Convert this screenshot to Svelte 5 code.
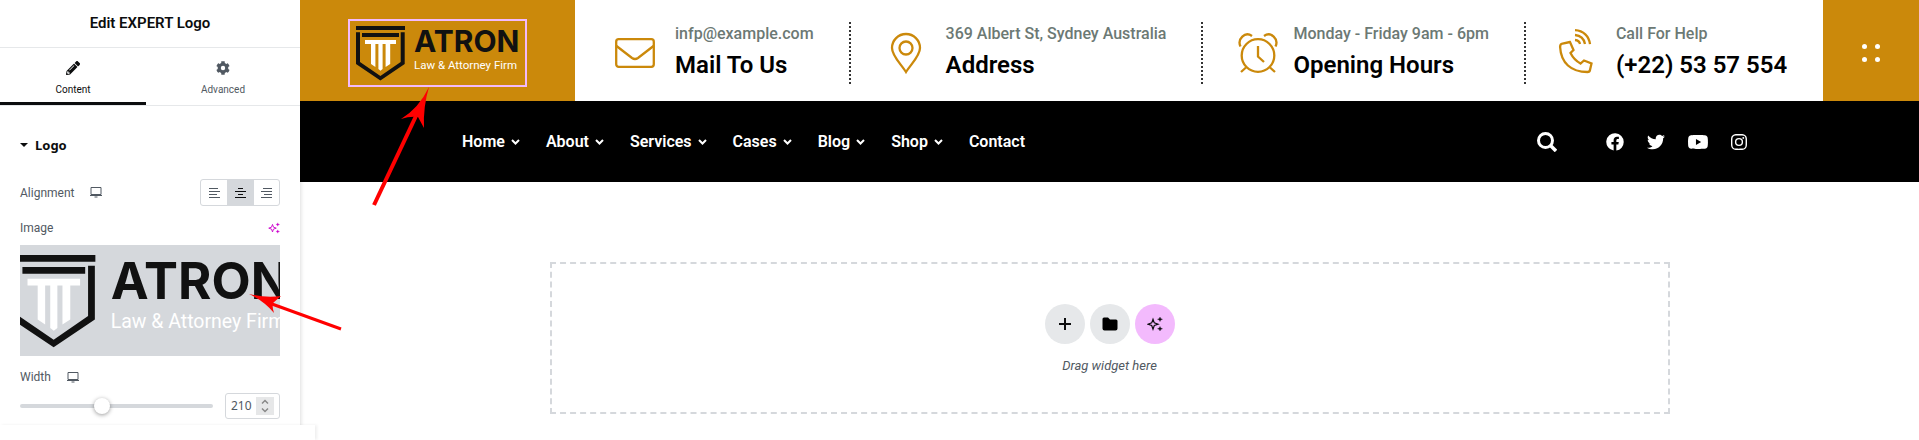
<script lang="ts">
  type Info = { icon: string; label: string; title: string };

  let align = $state('center');
  let width = $state(210);

  const infos: Info[] = [
    { icon: 'mail', label: 'infp@example.com', title: 'Mail To Us' },
    { icon: 'pin', label: '369 Albert St, Sydney Australia', title: 'Address' },
    { icon: 'clock', label: 'Monday - Friday 9am - 6pm', title: 'Opening Hours' },
    { icon: 'phone', label: 'Call For Help', title: '(+22) 53 57 554' },
  ];

  const menu = ['Home', 'About', 'Services', 'Cases', 'Blog', 'Shop', 'Contact'];

  // Line segments for the three text-alignment glyphs, top to bottom.
  const aligns = [
    { value: 'left', d: 'M0 1.500h9M0 4.500h11M0 7.500h8M0 10.500h11' },
    { value: 'center', d: 'M3 1.500h5M0 4.500h11M3 7.500h5M0 10.500h11' },
    { value: 'right', d: 'M2 1.500h9M0 4.500h11M3 7.500h8M0 10.500h11' },
  ];

  const socials = [
    { name: 'Facebook', w: 18, h: 18, box: '0 0 512 512', d: 'M504 256a248 248 0 1 0-287 245V328h-63v-72h63v-55c0-62 37-97 94-97 27 0 55 5 55 5v61h-31c-31 0-41 20-41 39v47h69l-11 72h-58v173a248 248 0 0 0 210-245z' },
    { name: 'Twitter', w: 18, h: 18, box: '0 0 512 512', d: 'M459 152c0 4 .3 9 .3 14C459 304 354 465 161 465c-60 0-115-17-161-47 8 1 16 1 25 1 49 0 94-16 130-45-46-1-85-31-98-73 7 1 13 2 20 2 9 0 19-2 27-4-48-10-84-52-84-103v-1c14 8 30 13 47 13-28-19-47-51-47-87 0-19 5-37 14-53 52 64 129 105 216 110-2-8-3-16-3-24 0-58 47-105 105-105 30 0 58 13 77 33 24-5 46-13 66-25-8 24-24 45-46 58 21-2 42-8 60-16-14 21-31 39-51 53z' },
    { name: 'YouTube', w: 20, h: 14, box: '16 64 544 384', d: 'M550 124c-6-24-25-42-49-49-43-11-213-11-213-11s-170 0-213 11c-24 7-43 25-49 49-11 43-11 132-11 132s0 90 11 133c6 23 25 41 49 48 43 11 213 11 213 11s170 0 213-11c24-7 43-25 49-48 11-43 11-133 11-133s0-89-11-132zM232 338V175l143 81z' },
    { name: 'Instagram', w: 16, h: 16, box: '0 32 448 448', d: 'M224 141a115 115 0 1 0 0 230 115 115 0 0 0 0-230zm0 190a75 75 0 1 1 0-150 75 75 0 0 1 0 150zm146-194a27 27 0 1 1-53 0 27 27 0 0 1 53 0zM132 32C60 34 2 90 1 164c-2 40-2 144 0 184 1 74 60 130 131 132 40 2 144 2 184 0 74-2 130-60 131-132 2-40 2-144 0-184-1-74-59-130-131-132-40-2-144-2-184 0zM312 72c64 1 94 31 95 96 2 36 2 140 0 176-1 62-31 94-95 96-36 2-140 2-176 0-63-2-94-32-96-96-2-36-2-140 0-176 1-62 31-95 96-96 36-2 140-2 176 0z' },
  ];
</script>

{#snippet logo()}
  <svg class="logo" viewBox="0 0 163 56" role="img" aria-label="Atron Law &amp; Attorney Firm">
    <g fill="#111">
      <path d="M0 0h49v4H0zM6 7h37v4H6z" />
      <path d="M0 6.3h4V36l20.4 14 20.3-14V6.3h4V38L24.4 54.4 0 38z" />
      <text x="58" y="26" font-family="Inter, sans-serif" font-size="30" font-weight="700">ATRON</text>
    </g>
    <g fill="#fff">
      <path d="M9 14h31v4h-5.8v20l-4.6 3V18h-3v25l-2.1 1.7-2.1-1.7V18h-3v23L15 38V18H9z" />
      <text x="58" y="43" font-family="Roboto, sans-serif" font-size="11.5">Law &amp; Attorney Firm</text>
    </g>
  </svg>
{/snippet}

{#snippet screen()}
  <svg class="screen" viewBox="0 0 12 11" width="12" height="11" aria-hidden="true">
    <path d="M1 .5h10v7H1zM0 8.500h12M4.500 10h3" fill="none" stroke="currentColor" />
  </svg>
{/snippet}

{#snippet sparkle(size: number)}
  <svg viewBox="0 0 16 16" width={size} height={size} aria-hidden="true">
    <path d="M6 3.200 7.300 6.900 11 8.200 7.300 9.500 6 13.200 4.700 9.500 1 8.200 4.700 6.900z" fill="none" stroke="currentColor" stroke-width="1.200" />
    <path d="m13 1 .7 1.600 1.800.7-1.800.7L13 5.600l-.7-1.600-1.800-.7 1.800-.7zM13 10.400l.7 1.600 1.800.7-1.800.7-.7 1.600-.7-1.600-1.800-.7 1.800-.7z" fill="currentColor" stroke="currentColor" stroke-width=".3" />
  </svg>
{/snippet}

<div class="editor">
  <aside class="panel">
    <h1>Edit EXPERT Logo</h1>

    <div class="tabs" role="tablist">
      <button class="tab active" role="tab" aria-selected="true">
        <svg viewBox="0 0 512 512" width="14" height="14" aria-hidden="true">
          <path d="m498 142-47 46c-5 5-12 5-17 0L324 78c-5-5-5-12 0-17l46-47c19-19 49-19 68 0l60 60c19 19 19 49 0 68zm-214-41L22 363 0 485c-2 16 11 30 28 27l121-21 262-263c5-4 5-12 0-17L301 101c-5-4-12-4-17 0zM124 340c-5-5-5-13 0-18l154-154c5-5 13-5 18 0s5 13 0 18L142 340c-5 5-13 5-18 0zm-36 84h48v36l-64 12-32-32 12-64h36z" />
        </svg>
        Content
      </button>
      <button class="tab" role="tab" aria-selected="false">
        <svg viewBox="0 0 512 512" width="14" height="14" aria-hidden="true">
          <path d="m487 316-42-25c4-23 4-47 0-70l42-25c5-3 8-9 6-14-12-36-30-68-55-95-4-4-10-5-15-2l-42 24c-18-15-39-27-61-35V25c0-5-4-11-10-12-36-8-74-8-109 0-6 1-10 7-10 12v49c-22 8-43 20-61 35L88 85c-5-3-11-2-15 2-25 27-44 60-55 95-2 5 1 11 6 14l42 25c-4 23-4 47 0 70l-42 25c-5 3-8 9-6 14 12 36 30 68 55 95 4 4 10 5 15 2l42-24c18 15 39 27 61 35v49c0 5 4 11 10 12 36 8 74 8 109 0 6-1 10-7 10-12v-49c22-8 43-20 61-35l42 24c5 3 11 2 15-2 25-27 44-60 55-95 1-5-1-11-6-14zm-231 20a80 80 0 1 1 0-160 80 80 0 0 1 0 160z" />
        </svg>
        Advanced
      </button>
    </div>

    <section class="controls">
      <button class="heading"><span class="caret"></span>Logo</button>

      <div class="row align-row">
        <span class="name">Alignment {@render screen()}</span>
        <div class="choices" role="group" aria-label="Alignment">
          {#each aligns as a}
            <button
              class:chosen={align === a.value}
              aria-label={a.value}
              aria-pressed={align === a.value}
              onclick={() => (align = a.value)}
            >
              <svg viewBox="0 0 11 11" width="11" height="11"><path d={a.d} stroke="currentColor" /></svg>
            </button>
          {/each}
        </div>
      </div>

      <div class="row image-row">
        <span class="name">Image</span>
        <button class="ai" aria-label="Edit with AI">{@render sparkle(12)}</button>
      </div>
      <button class="preview" aria-label="Choose image">{@render logo()}</button>

      <div class="row width-row">
        <label class="name" for="logo-width">Width {@render screen()}</label>
      </div>
      <div class="row slider-row">
        <input type="range" min="0" max="500" bind:value={width} aria-label="Width slider" />
        <div class="number">
          <input id="logo-width" type="text" inputmode="numeric" bind:value={width} />
          <span class="spin" aria-hidden="true">
            <svg viewBox="0 0 18 18" width="18" height="18"><path d="m6 6.500 3-3 3 3M6 11.500l3 3 3-3" fill="none" stroke="#888" stroke-width="1.500" /></svg>
          </span>
        </div>
      </div>
    </section>
    <div class="panel-end"></div>
  </aside>

  <main class="site">
    <header class="top">
      <a class="brand" href="#home"><span class="selected">{@render logo()}</span></a>
      <div class="infos">
        {#each infos as info}
          <div class="info {info.icon}">
            <svg class="icon" viewBox="0 0 40 48" width="40" height="48" fill="none" stroke="#cb890b" stroke-width="2.300" aria-hidden="true">
              {#if info.icon === 'mail'}
                <rect x="1.200" y="10.200" width="37.600" height="27.600" rx="2.500" />
                <path d="M1.500 17 17 29q3 2 6 0l15.500-12" />
              {:else if info.icon === 'pin'}
                <path d="M20 43C15 35 6 27 6 19a14 14 0 0 1 28 0c0 8-9 16-14 24z" />
                <circle cx="20" cy="19" r="6.500" />
              {:else if info.icon === 'clock'}
                <circle cx="20" cy="26.500" r="16.300" />
                <path d="M20 17v10.500l6 5.500M8 38.500l-5 4.500M32 38.500l5 4.500M2.500 17.500C-1 10 7 2 14 7M37.500 17.500C41 10 33 2 26 7" />
              {:else}
                <path d="m14 13-7.500 1.500c-2 .5-2.500 1.500-2.400 3.500C5 34 15 43 31.500 43c1.500 0 2.300-.6 2.500-2l1.500-6.500-7.500-3-3.500 3c-4.500-2.500-7.500-5.500-10-10.500l3-3zM19 1.200c8.500.5 14 6 15 14M19 6c5.500.5 9 4 10 9M19 11c2.800.3 4.600 1.800 5 4" />
              {/if}
            </svg>
            <div>
              <p>{info.label}</p>
              <h2>{info.title}</h2>
            </div>
          </div>
        {/each}
      </div>
      <button class="more" aria-label="More">
        <i></i><i></i><i></i><i></i>
      </button>
    </header>

    <nav class="menu">
      <ul>
        {#each menu as item, i}
          <li>
            <a href="#{item.toLowerCase()}">
              {item}
              {#if i < menu.length - 1}
                <svg viewBox="0 0 9 6" width="9" height="6" aria-hidden="true"><path d="m1 1 3.500 3.500L8 1" fill="none" stroke="#fff" stroke-width="2" /></svg>
              {/if}
            </a>
          </li>
        {/each}
      </ul>
      <div class="links">
        <button class="search" aria-label="Search">
          <svg viewBox="0 0 20 20" width="20" height="20"><circle cx="8.500" cy="8.500" r="7" fill="none" stroke="#fff" stroke-width="3" /><path d="m13.500 13.500 5.500 5.500" stroke="#fff" stroke-width="3.500" /></svg>
        </button>
        {#each socials as s}
          <a href="#{s.name.toLowerCase()}" aria-label={s.name}>
            <svg viewBox={s.box} width={s.w} height={s.h}><path d={s.d} fill="#fff" /></svg>
          </a>
        {/each}
      </div>
    </nav>

    <section class="dropzone">
      <div class="actions">
        <button aria-label="Add container">
          <svg viewBox="0 0 12 12" width="12" height="12"><path d="M6 0v12M0 6h12" stroke="#0c0d0e" stroke-width="2" /></svg>
        </button>
        <button aria-label="Add template">
          <svg viewBox="0 0 16 14" width="16" height="14"><path d="M2 .5h4l2 2h6a1.500 1.500 0 0 1 1.500 1.500v7.500a2 2 0 0 1-2 2h-11a2 2 0 0 1-2-2V2A1.500 1.500 0 0 1 2 .5z" /></svg>
        </button>
        <button class="magic" aria-label="Build with AI">{@render sparkle(16)}</button>
      </div>
      <p>Drag widget here</p>
    </section>
  </main>

  <svg class="arrows" viewBox="0 0 450 340" width="450" height="340" fill="red" aria-hidden="true">
    <path d="m374 205 42-89" stroke="red" stroke-width="4" />
    <path d="M429 87q-6 20-5 41l-6-11q-8-1-17 2 18-11 28-32z" />
    <path d="m341 329-69-25" stroke="red" stroke-width="3" />
    <path d="M249 294q16 4 32 2l-8 7q-1 4 1 10-10-12-25-19z" />
  </svg>
</div>

<style>
  :global(body) {
    margin: 0;
    background: #fff;
  }
  .editor {
    position: relative;
    display: flex;
    min-height: 100vh;
    overflow: hidden;
    font-family: Roboto, sans-serif;
    color: #0c0d0e;
  }
  .editor :is(h1, h2, p, ul) {
    margin: 0;
    padding: 0;
  }
  button {
    padding: 0;
    border: 0;
    background: none;
    color: inherit;
    font: inherit;
    cursor: pointer;
  }
  svg {
    display: block;
    flex: none;
  }
  .logo {
    overflow: visible;
  }

  /* Settings panel */
  .panel {
    display: flex;
    flex-direction: column;
    flex: 0 0 300px;
    width: 300px;
    box-shadow: 1px 0 4px #0002;
  }
  .panel h1 {
    border-bottom: 1px solid #e6e8ea;
    font-size: 15px;
    line-height: 47px;
    font-weight: 600;
    text-align: center;
  }
  .tabs {
    display: flex;
    border-bottom: 1px solid #e6e8ea;
  }
  .tab {
    display: flex;
    flex: 1;
    flex-direction: column;
    align-items: center;
    gap: 9px;
    padding: 13px 0 6px;
    border-bottom: 3px solid transparent;
    color: #515962;
    font-size: 10px;
    line-height: 12px;
  }
  .tab svg {
    fill: currentColor;
  }
  .tab.active {
    flex: 0 0 146px;
    border-bottom-color: #0c0d0e;
    color: #0c0d0e;
  }
  .controls {
    padding: 29px 20px 6px;
    color: #515962;
    font-size: 12px;
  }
  .heading {
    display: flex;
    align-items: center;
    gap: 7px;
    color: #0c0d0e;
    font: 700 13px/20px "Noto Sans", sans-serif;
  }
  .caret {
    border: 4px solid transparent;
    border-top-color: currentColor;
    border-bottom: 0;
  }
  .row {
    display: flex;
    align-items: center;
    justify-content: space-between;
  }
  .name {
    display: flex;
    align-items: center;
    gap: 16px;
    line-height: 18px;
  }
  .align-row {
    margin-top: 24px;
  }
  .choices {
    display: flex;
    overflow: hidden;
    border: 1px solid #d5d8dc;
    border-radius: 3px;
  }
  .choices button {
    display: grid;
    place-items: center;
    width: 26px;
    height: 25px;
  }
  .choices button + button {
    border-left: 1px solid #d5d8dc;
  }
  .choices .chosen {
    background: #d5d8dc;
    color: #0c0d0e;
  }
  .image-row {
    margin-top: 13px;
  }
  .ai {
    color: #c0c;
  }
  .preview {
    display: flex;
    align-items: center;
    justify-content: center;
    width: 100%;
    height: 111px;
    box-sizing: border-box;
    margin-top: 8px;
    padding-top: 4px;
    overflow: hidden;
    background: #d5d8dc;
  }
  .preview .logo {
    width: 277px;
    height: 95px;
  }
  .width-row {
    margin-top: 12px;
  }
  .slider-row {
    gap: 12px;
    margin-top: 7px;
  }
  input[type='range'] {
    flex: 1;
    min-width: 0;
    height: 16px;
    margin: 0;
    appearance: none;
    background: none;
  }
  input[type='range']::-webkit-slider-runnable-track {
    height: 4px;
    border-radius: 4px;
    background: #d5d8dc;
  }
  input[type='range']::-webkit-slider-thumb {
    width: 16px;
    height: 16px;
    margin-top: -6px;
    appearance: none;
    border-radius: 50%;
    background: #fff;
    box-shadow: 0 1px 4px #0006;
  }
  .number {
    display: flex;
    align-items: center;
    width: 53px;
    height: 24px;
    border: 1px solid #d5d8dc;
    border-radius: 3px;
  }
  .number input {
    width: 30px;
    padding: 0 0 0 5px;
    box-sizing: border-box;
    border: 0;
    background: none;
    color: #515962;
    font: 12px/18px "Noto Sans", sans-serif;
  }
  .spin {
    background: #e6e7e8;
  }
  .panel-end {
    flex: 1;
    width: 315px;
    background: #fff;
    box-shadow: 2px 0 3px #0001;
  }

  /* Site preview */
  .site {
    display: flex;
    flex: 1;
    flex-direction: column;
    min-width: 0;
  }
  .top {
    display: flex;
    height: 101px;
  }
  .brand {
    display: flex;
    align-items: center;
    justify-content: center;
    flex: 0 0 275px;
    box-sizing: border-box;
    padding-top: 5px;
    background: #cb890b;
  }
  .selected {
    padding: 5px 6px 3px;
    border: 2px solid #f3bafd;
  }
  .selected .logo {
    width: 163px;
    height: 56px;
  }
  .infos {
    display: flex;
    flex: 1;
    align-items: center;
    min-width: 0;
    padding-left: 5px;
    white-space: nowrap;
  }
  .info {
    display: flex;
    align-items: center;
    gap: 20px;
    height: 62px;
    margin-top: 5px;
    padding: 0 35px;
    border-right: 2px dotted #333;
  }
  .info.clock {
    gap: 15px;
  }
  .info.phone {
    padding-left: 30px;
    border-right: 0;
  }
  .info p {
    color: #6c7974;
    font-size: 16px;
    font-weight: 500;
    line-height: 24px;
  }
  .info h2 {
    margin-top: 2px;
    padding-bottom: 2px;
    color: #000;
    font-size: 24px;
    font-weight: 600;
    line-height: 34px;
  }
  .more {
    display: grid;
    grid-template-columns: 5px 5px;
    gap: 8px;
    align-content: center;
    justify-content: center;
    flex: 0 0 96px;
    padding-top: 4px;
    background: #cb890b;
  }
  .more i {
    width: 5px;
    height: 5px;
    border-radius: 50%;
    background: #fff;
  }
  .menu {
    display: flex;
    align-items: center;
    justify-content: space-between;
    height: 81px;
    padding: 0 172px 0 162px;
    background: #000;
    color: #fff;
  }
  .menu ul {
    display: flex;
    gap: 26px;
    list-style: none;
  }
  .menu li a {
    display: flex;
    align-items: center;
    gap: 6px;
    color: #fff;
    font-size: 16px;
    font-weight: 600;
    line-height: 24px;
    text-decoration: none;
  }
  .links {
    display: flex;
    align-items: center;
    gap: 23px;
  }
  .search {
    margin-right: 26px;
  }
  .dropzone {
    display: flex;
    flex-direction: column;
    align-items: center;
    width: 1120px;
    max-width: 100%;
    box-sizing: border-box;
    margin: 80px auto 0;
    padding: 40px 0 37px;
    border: 2px dashed #d5d8dc;
  }
  .actions {
    display: flex;
    gap: 5px;
  }
  .actions button {
    display: grid;
    place-items: center;
    width: 40px;
    height: 40px;
    border-radius: 50%;
    background: #e6e8ea;
  }
  .actions .magic {
    background: #f3bafd;
  }
  .dropzone p {
    margin-top: 13px;
    color: #515962;
    font-size: 13px;
    font-style: italic;
    line-height: 18px;
  }

  /* Callout arrows lie over both the panel and the preview. */
  .arrows {
    position: absolute;
    top: 0;
    left: 0;
    pointer-events: none;
  }
</style>
